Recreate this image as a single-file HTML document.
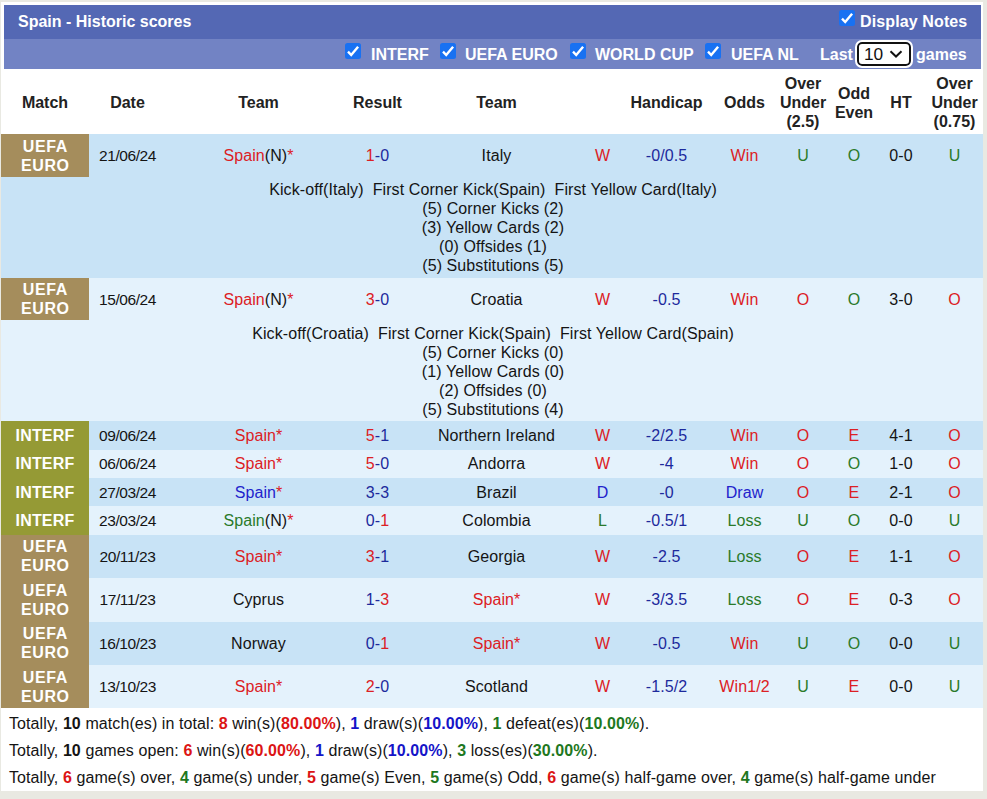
<!DOCTYPE html>
<html><head><meta charset="utf-8"><title>Spain - Historic scores</title>
<style>
html,body{margin:0;padding:0}
body{width:987px;height:799px;overflow:hidden;position:relative;background:#e9e9e2;font-family:"Liberation Sans",Arial,Helvetica,sans-serif;font-size:16px;color:#141414;line-height:19px;letter-spacing:0.09px}
#wrap{position:absolute;left:1.2px;top:1.8px;width:981.6px;height:789.4px;background:#fff}
#title,#filt,#hdr,.lg{letter-spacing:0}
#title{position:absolute;left:4px;top:5px;width:976.6px;height:34px;background:#5468b4;color:#fff;font-weight:bold}
#title .t{position:absolute;left:14px;top:7px}
#filt{position:absolute;left:4px;top:39px;width:976.6px;height:30px;background:#7283c4;color:#fff;font-weight:bold}
.cb{position:absolute;width:16px;height:16px;border-radius:2.5px;background:#1871f2}
.cb svg{position:absolute;left:0;top:0}
.lb{position:absolute;white-space:nowrap}
#hdr{position:absolute;left:1px;top:70px;width:982px;height:65px;font-weight:bold;color:#222}
.row{position:absolute;left:1px;width:982.2px}
.row.d{background:#c8e3f6}
.row.l{background:#e4f2fc}
.c{position:absolute;top:0;height:100%;display:flex;align-items:center;justify-content:center;text-align:center;white-space:nowrap}
#hdr .c{white-space:normal}
.c1{left:0px;width:88px}
.c2{left:88px;width:77px}
.c3{left:165px;width:185px}
.c4{left:350px;width:53px}
.c5{left:403px;width:185px}
.c6{left:588px;width:27px}
.c7{left:615px;width:101px}
.c8{left:716px;width:55px}
.c9{left:771px;width:62px}
.c10{left:833px;width:40px}
.c11{left:873px;width:54px}
.c12{left:927px;width:53px}
.lg{color:#fff;font-weight:bold}
.lg span{position:relative}
.euro span{letter-spacing:0.6px;left:0.3px}
.interf span{letter-spacing:0.2px}
.euro{background:#a58d5c}
.interf{background:#959a35}
.dt{letter-spacing:0}
.dt span{font-size:15.5px;letter-spacing:-0.42px}
.r{color:#dc2024}
.b{color:#2222cc}
.g{color:#2a7a2a}
.hb{color:#1d2a9c}
.det .dtx{position:absolute;left:1px;width:982px;top:3.6px;text-align:center;line-height:19px}
#tot{position:absolute;left:9px;top:709.5px;line-height:27px;white-space:nowrap}
#tot b.r{color:#dc1414} #tot b.b{color:#1414c8} #tot b.g{color:#1e781e}
#sel{position:absolute;left:853.1px;top:2.8px;width:49.7px;height:19.8px;border:2.5px solid #111;border-radius:5px;background:#fff;color:#111;font-weight:normal;outline:2px solid #fff;outline-offset:0}
</style></head><body>
<div id="wrap"></div>
<div id="title"><div class="t">Spain - Historic scores</div>
 <div class="cb" style="left:835.4px;top:5px"><svg width="16" height="16" viewBox="0 0 16 16"><path d="M3 8.7 L6.2 12 L13.1 3.7" fill="none" stroke="#fff" stroke-width="2.4"/></svg></div>
 <div class="lb" style="left:856px;top:7px;letter-spacing:0.12px">Display Notes</div>
</div>
<div id="filt">
 <div class="cb" style="left:341px;top:4px"><svg width="16" height="16" viewBox="0 0 16 16"><path d="M3 8.7 L6.2 12 L13.1 3.7" fill="none" stroke="#fff" stroke-width="2.4"/></svg></div>
 <div class="lb" style="left:367px;top:6px">INTERF</div>
 <div class="cb" style="left:436px;top:4px"><svg width="16" height="16" viewBox="0 0 16 16"><path d="M3 8.7 L6.2 12 L13.1 3.7" fill="none" stroke="#fff" stroke-width="2.4"/></svg></div>
 <div class="lb" style="left:461px;top:6px">UEFA EURO</div>
 <div class="cb" style="left:566px;top:4px"><svg width="16" height="16" viewBox="0 0 16 16"><path d="M3 8.7 L6.2 12 L13.1 3.7" fill="none" stroke="#fff" stroke-width="2.4"/></svg></div>
 <div class="lb" style="left:591px;top:6px">WORLD CUP</div>
 <div class="cb" style="left:701px;top:4px"><svg width="16" height="16" viewBox="0 0 16 16"><path d="M3 8.7 L6.2 12 L13.1 3.7" fill="none" stroke="#fff" stroke-width="2.4"/></svg></div>
 <div class="lb" style="left:727px;top:6px">UEFA NL</div>
 <div class="lb" style="left:816px;top:6px">Last</div>
 <div id="sel"><span style="position:absolute;left:4.8px;top:0.4px;font-size:17.3px;line-height:20px">10</span><svg style="position:absolute;left:30px;top:4.6px" width="14" height="12" viewBox="0 0 14 12"><path d="M1.5 3.3 L7 8.5 L12.5 3.3" fill="none" stroke="#111" stroke-width="2"/></svg></div>
 <div class="lb" style="left:912px;top:6px">games</div>
</div>
<div id="hdr">
 <div class="c c1">Match</div><div class="c c2">Date</div><div class="c c3">Team</div><div class="c c4">Result</div><div class="c c5">Team</div><div class="c c6"></div>
 <div class="c c7">Handicap</div><div class="c c8">Odds</div><div class="c c9">Over<br>Under<br>(2.5)</div><div class="c c10">Odd<br>Even</div><div class="c c11">HT</div><div class="c c12">Over<br>Under<br>(0.75)</div>
</div>
<div class="row d" style="top:134px;height:42.5px"><div class="c c1 lg euro"><span style="top:1px">UEFA<br>EURO</span></div><div class="c c2 dt"><span>21/06/24</span></div><div class="c c3"><span class="r">Spain</span>(N)<span class="r">*</span></div><div class="c c4"><span class="r">1</span><span class="hb">-0</span></div><div class="c c5">Italy</div><div class="c c6 r">W</div><div class="c c7 hb">-0/0.5</div><div class="c c8 r">Win</div><div class="c c9 g">U</div><div class="c c10 g">O</div><div class="c c11">0-0</div><div class="c c12 g">U</div></div>
<div class="row l" style="top:277.7px;height:42.69999999999999px"><div class="c c1 lg euro"><span>UEFA<br>EURO</span></div><div class="c c2 dt"><span>15/06/24</span></div><div class="c c3"><span class="r">Spain</span>(N)<span class="r">*</span></div><div class="c c4"><span class="r">3</span><span class="hb">-0</span></div><div class="c c5">Croatia</div><div class="c c6 r">W</div><div class="c c7 hb">-0.5</div><div class="c c8 r">Win</div><div class="c c9 r">O</div><div class="c c10 g">O</div><div class="c c11">3-0</div><div class="c c12 r">O</div></div>
<div class="row d" style="top:421px;height:28.5px"><div class="c c1 lg interf"><span>INTERF</span></div><div class="c c2 dt"><span>09/06/24</span></div><div class="c c3"><span class="r">Spain</span><span class="r">*</span></div><div class="c c4"><span class="r">5</span><span class="hb">-1</span></div><div class="c c5">Northern Ireland</div><div class="c c6 r">W</div><div class="c c7 hb">-2/2.5</div><div class="c c8 r">Win</div><div class="c c9 r">O</div><div class="c c10 r">E</div><div class="c c11">4-1</div><div class="c c12 r">O</div></div>
<div class="row l" style="top:449.5px;height:28.5px"><div class="c c1 lg interf"><span>INTERF</span></div><div class="c c2 dt"><span>06/06/24</span></div><div class="c c3"><span class="r">Spain</span><span class="r">*</span></div><div class="c c4"><span class="r">5</span><span class="hb">-0</span></div><div class="c c5">Andorra</div><div class="c c6 r">W</div><div class="c c7 hb">-4</div><div class="c c8 r">Win</div><div class="c c9 r">O</div><div class="c c10 g">O</div><div class="c c11">1-0</div><div class="c c12 r">O</div></div>
<div class="row d" style="top:478px;height:28px"><div class="c c1 lg interf"><span>INTERF</span></div><div class="c c2 dt"><span>27/03/24</span></div><div class="c c3"><span class="b">Spain</span><span class="r">*</span></div><div class="c c4"><span class="hb">3-3</span></div><div class="c c5">Brazil</div><div class="c c6 b">D</div><div class="c c7 hb">-0</div><div class="c c8 b">Draw</div><div class="c c9 r">O</div><div class="c c10 r">E</div><div class="c c11">2-1</div><div class="c c12 r">O</div></div>
<div class="row l" style="top:506px;height:29px"><div class="c c1 lg interf"><span>INTERF</span></div><div class="c c2 dt"><span>23/03/24</span></div><div class="c c3"><span class="g">Spain</span>(N)<span class="r">*</span></div><div class="c c4"><span class="hb">0-</span><span class="r">1</span></div><div class="c c5">Colombia</div><div class="c c6 g">L</div><div class="c c7 hb">-0.5/1</div><div class="c c8 g">Loss</div><div class="c c9 g">U</div><div class="c c10 g">O</div><div class="c c11">0-0</div><div class="c c12 g">U</div></div>
<div class="row d" style="top:535px;height:43px"><div class="c c1 lg euro"><span style="top:-1px">UEFA<br>EURO</span></div><div class="c c2 dt"><span>20/11/23</span></div><div class="c c3"><span class="r">Spain</span><span class="r">*</span></div><div class="c c4"><span class="r">3</span><span class="hb">-1</span></div><div class="c c5">Georgia</div><div class="c c6 r">W</div><div class="c c7 hb">-2.5</div><div class="c c8 g">Loss</div><div class="c c9 r">O</div><div class="c c10 r">E</div><div class="c c11">1-1</div><div class="c c12 r">O</div></div>
<div class="row l" style="top:578px;height:43.5px"><div class="c c1 lg euro"><span>UEFA<br>EURO</span></div><div class="c c2 dt"><span>17/11/23</span></div><div class="c c3">Cyprus</div><div class="c c4"><span class="hb">1-</span><span class="r">3</span></div><div class="c c5"><span class="r">Spain</span><span class="r">*</span></div><div class="c c6 r">W</div><div class="c c7 hb">-3/3.5</div><div class="c c8 g">Loss</div><div class="c c9 r">O</div><div class="c c10 r">E</div><div class="c c11">0-3</div><div class="c c12 r">O</div></div>
<div class="row d" style="top:621.5px;height:43.5px"><div class="c c1 lg euro"><span>UEFA<br>EURO</span></div><div class="c c2 dt"><span>16/10/23</span></div><div class="c c3">Norway</div><div class="c c4"><span class="hb">0-</span><span class="r">1</span></div><div class="c c5"><span class="r">Spain</span><span class="r">*</span></div><div class="c c6 r">W</div><div class="c c7 hb">-0.5</div><div class="c c8 r">Win</div><div class="c c9 g">U</div><div class="c c10 g">O</div><div class="c c11">0-0</div><div class="c c12 g">U</div></div>
<div class="row l" style="top:665px;height:43px"><div class="c c1 lg euro"><span>UEFA<br>EURO</span></div><div class="c c2 dt"><span>13/10/23</span></div><div class="c c3"><span class="r">Spain</span><span class="r">*</span></div><div class="c c4"><span class="r">2</span><span class="hb">-0</span></div><div class="c c5">Scotland</div><div class="c c6 r">W</div><div class="c c7 hb">-1.5/2</div><div class="c c8 r">Win1/2</div><div class="c c9 g">U</div><div class="c c10 r">E</div><div class="c c11">0-0</div><div class="c c12 g">U</div></div>
<div class="row det d" style="top:176.5px;height:101.19999999999999px"><div class="dtx">Kick-off(Italy)&nbsp; First Corner Kick(Spain)&nbsp; First Yellow Card(Italy)<br>(5) Corner Kicks (2)<br>(3) Yellow Cards (2)<br>(0) Offsides (1)<br>(5) Substitutions (5)</div></div>
<div class="row det l" style="top:320.4px;height:100.60000000000002px"><div class="dtx">Kick-off(Croatia)&nbsp; First Corner Kick(Spain)&nbsp; First Yellow Card(Spain)<br>(5) Corner Kicks (0)<br>(1) Yellow Cards (0)<br>(2) Offsides (0)<br>(5) Substitutions (4)</div></div>
<div id="tot">
Totally, <b>10</b> match(es) in total: <b class="r">8</b> win(s)(<b class="r">80.00%</b>), <b class="b">1</b> draw(s)(<b class="b">10.00%</b>), <b class="g">1</b> defeat(es)(<b class="g">10.00%</b>).<br>
Totally, <b>10</b> games open: <b class="r">6</b> win(s)(<b class="r">60.00%</b>), <b class="b">1</b> draw(s)(<b class="b">10.00%</b>), <b class="g">3</b> loss(es)(<b class="g">30.00%</b>).<br>
Totally, <b class="r">6</b> game(s) over, <b class="g">4</b> game(s) under, <b class="r">5</b> game(s) Even, <b class="g">5</b> game(s) Odd, <b class="r">6</b> game(s) half-game over, <b class="g">4</b> game(s) half-game under
</div>
</body></html>
